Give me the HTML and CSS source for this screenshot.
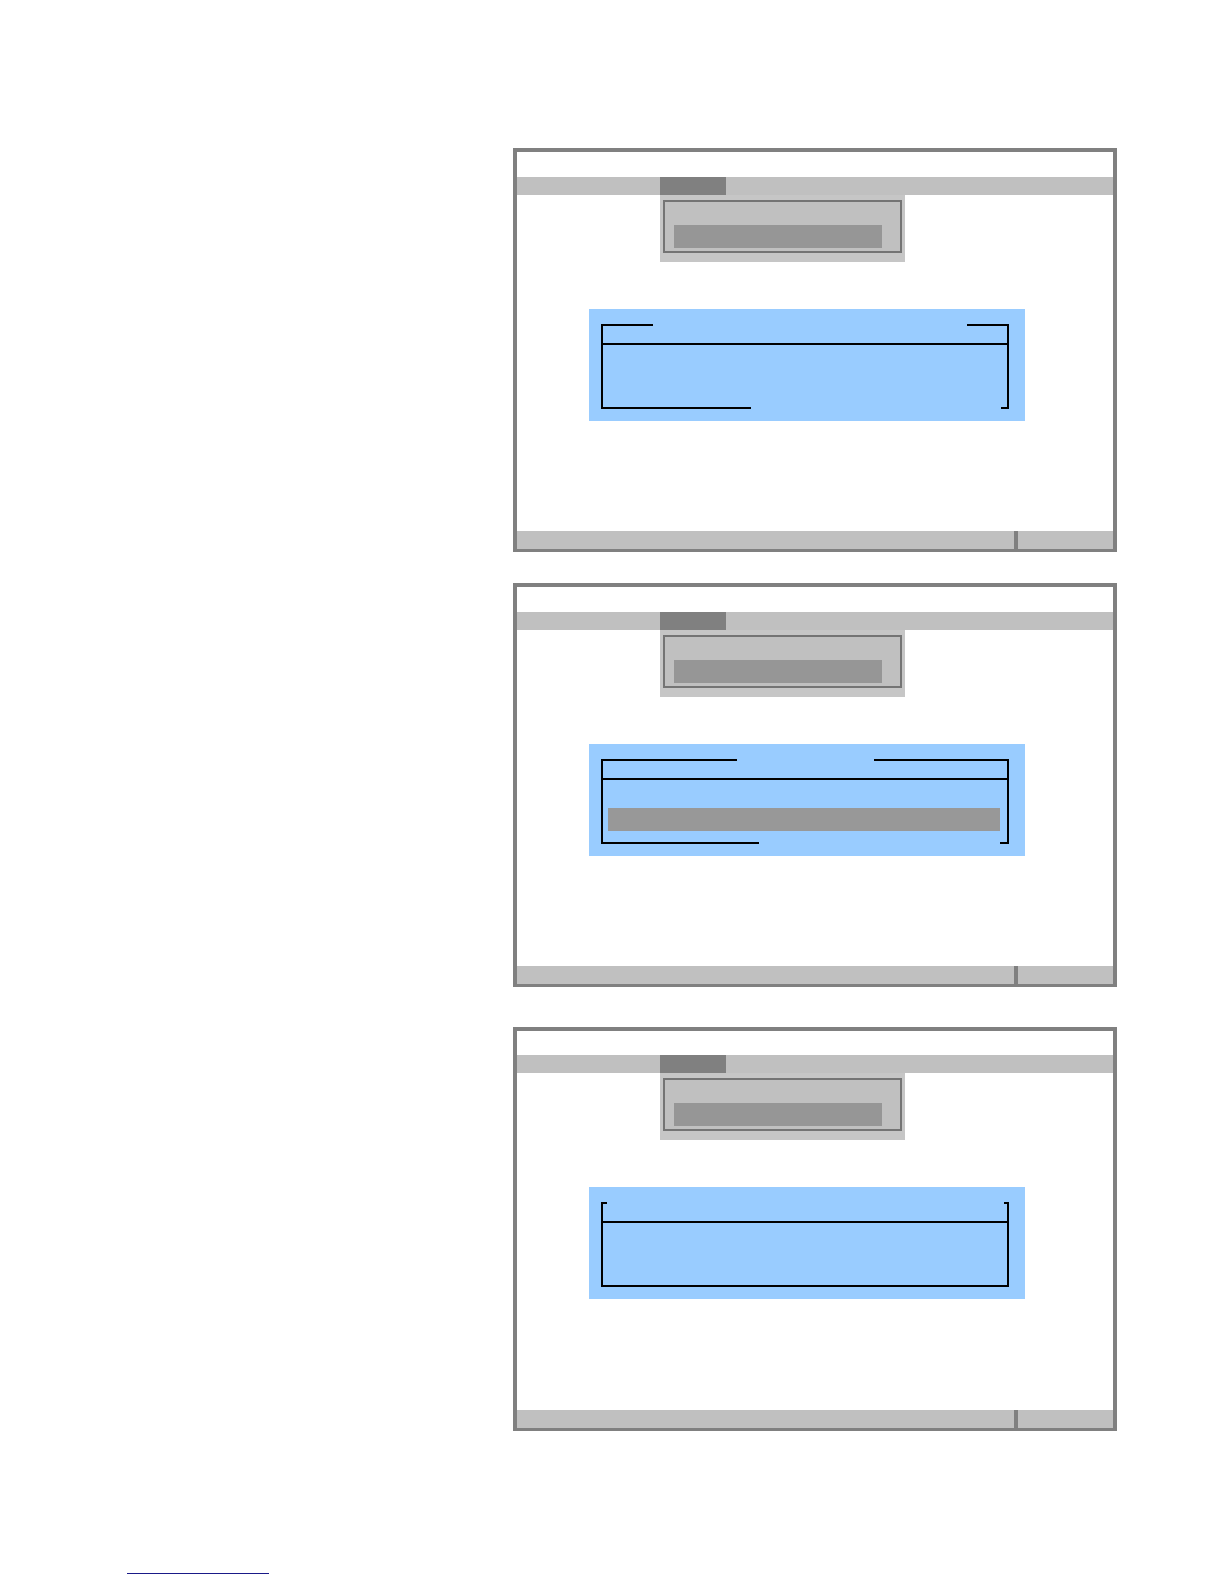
FILE: index.html
```html
<!DOCTYPE html>
<html lang="en">
<head>
<meta charset="utf-8">
<title>Screens</title>
<link rel="stylesheet" href="styles.css">
</head>
<body>
<div class="page">
  <div class="screens">
    <div class="screen">
      <div class="menubar"><div class="menu-gap"></div><div class="menu-active"></div></div>
      <div class="dropdown"><div class="dropdown-inner"><div class="dropdown-item"></div></div></div>
      <div class="dialog">
        <div class="frame">
          <div class="frame-top"><div class="seg seg-t1l"></div><div class="seg seg-t1r"></div></div>
          <div class="frame-sep"></div>
          <div class="frame-body"></div>
          <div class="frame-bottom"><div class="seg seg-b1l"></div><div class="seg seg-b1r"></div></div>
        </div>
      </div>
      <div class="statusbar"><div class="status-main"></div><div class="status-div"></div><div class="status-side"></div></div>
    </div>

    <div class="screen screen-2">
      <div class="menubar"><div class="menu-gap"></div><div class="menu-active"></div></div>
      <div class="dropdown"><div class="dropdown-inner"><div class="dropdown-item"></div></div></div>
      <div class="dialog">
        <div class="frame">
          <div class="frame-top"><div class="seg seg-t2l"></div><div class="seg seg-t2r"></div></div>
          <div class="frame-sep"></div>
          <div class="frame-body frame-body-bar"><div class="list-item"></div></div>
          <div class="frame-bottom"><div class="seg seg-b2l"></div><div class="seg seg-b2r"></div></div>
        </div>
      </div>
      <div class="statusbar"><div class="status-main"></div><div class="status-div"></div><div class="status-side"></div></div>
    </div>

    <div class="screen screen-3">
      <div class="menubar"><div class="menu-gap"></div><div class="menu-active"></div></div>
      <div class="dropdown"><div class="dropdown-inner"><div class="dropdown-item"></div></div></div>
      <div class="dialog">
        <div class="frame">
          <div class="frame-top"><div class="seg seg-t3l"></div><div class="seg seg-t3r"></div></div>
          <div class="frame-sep"></div>
          <div class="frame-body"></div>
          <div class="frame-bottom"><div class="seg seg-full"></div></div>
        </div>
      </div>
      <div class="statusbar"><div class="status-main"></div><div class="status-div"></div><div class="status-side"></div></div>
    </div>
  </div>
  <div class="footer-link"></div>
</div>
</body>
</html>
```

FILE: styles.css
```css
html, body {
  margin: 0;
  padding: 0;
  background: #ffffff;
  font-family: "Liberation Sans", Arial, sans-serif;
}

.page {
  padding-top: 148px;
  height: 1584px;
  box-sizing: border-box;
  overflow: hidden;
}

.screens {
  margin-left: 513px;
  width: 604px;
  display: flex;
  flex-direction: column;
}

.screen {
  box-sizing: border-box;
  height: 404px;
  border: 4px solid #808080;
  border-bottom-width: 3px;
  background: #ffffff;
  display: flex;
  flex-direction: column;
  padding-top: 25px;
}

.screen-2 {
  margin-top: 31px;
}

.screen-3 {
  margin-top: 40px;
  padding-top: 24px;
}

/* menu bar */
.menubar {
  height: 18px;
  background: #c0c0c0;
  display: flex;
}

.menu-gap {
  width: 143px;
}

.menu-active {
  width: 66px;
  background: #808080;
}

/* dropdown */
.dropdown {
  margin-left: 143px;
  width: 245px;
  box-sizing: border-box;
  background: #c6c6c6;
  padding: 5px 3px 9px 3px;
}

.dropdown-inner {
  border: 2px solid #747474;
  background: #c0c0c0;
  padding: 23px 18px 3px 9px;
}

.dropdown-item {
  height: 23px;
  background: #969696;
}

/* dialog */
.dialog {
  margin-top: 47px;
  margin-left: 72px;
  width: 436px;
  height: 112px;
  box-sizing: border-box;
  background: #99ccff;
  padding: 15px 0 0 12px;
}

.frame {
  box-sizing: border-box;
  width: 408px;
  height: 85px;
  border-left: 2px solid #000000;
  border-right: 2px solid #000000;
  display: flex;
  flex-direction: column;
}

.frame-top {
  height: 19px;
  display: flex;
  justify-content: space-between;
  align-items: flex-start;
}

.frame-sep {
  height: 2px;
  background: #000000;
}

.frame-body {
  flex: 1;
}

.frame-body-bar {
  padding: 28px 7px 0 5px;
}

.list-item {
  height: 23px;
  background: #989898;
}

.frame-bottom {
  height: 2px;
  display: flex;
  justify-content: space-between;
}

.seg {
  height: 2px;
  background: #000000;
}

.seg-t1l { width: 50px; }
.seg-t1r { width: 40px; }
.seg-b1l { width: 148px; }
.seg-b1r { width: 6px; }

.seg-t2l { width: 134px; }
.seg-t2r { width: 133px; }
.seg-b2l { width: 156px; }
.seg-b2r { width: 7px; }

.seg-t3l { width: 4px; }
.seg-t3r { width: 3px; }
.seg-full { flex: 1; }

/* status bar */
.statusbar {
  margin-top: auto;
  height: 18px;
  display: flex;
}

.status-main {
  flex: 1;
  background: #c0c0c0;
}

.status-div {
  width: 4px;
  background: #808080;
}

.status-side {
  width: 95px;
  background: #c0c0c0;
}

/* footer link underline */
.footer-link {
  margin: 142px 0 0 127px;
  width: 142px;
  height: 1px;
  background: #1a1a88;
}
```
